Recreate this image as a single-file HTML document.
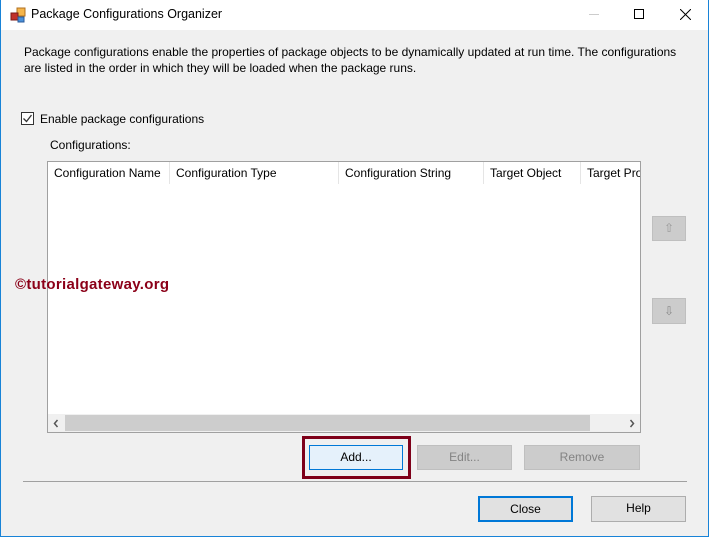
<!DOCTYPE html>
<html><head><style>
*{margin:0;padding:0;box-sizing:border-box}
body{width:709px;height:537px;background:#f0f0f0;font-family:"Liberation Sans",sans-serif;font-size:12px;color:#000;position:relative;overflow:hidden}
.a{position:absolute}
.btn{position:absolute;border:1px solid #adadad;background:#e1e1e1;text-align:center;line-height:23px;font-size:12px}
.dis{border-color:#bfbfbf;background:#cccccc;color:#838383}
.hd{position:absolute;top:0;height:22px;line-height:22px;padding-left:6px;border-right:1px solid #e5e5e5;white-space:nowrap;overflow:hidden}
</style></head><body>
<div class="a" style="left:0;top:0;width:709px;height:537px;border:1px solid #1883d7"></div>
<div class="a" style="left:1px;top:0;width:707px;height:30px;background:#fff"></div>
<svg class="a" style="left:10px;top:7px" width="16" height="16"><rect x="7" y="1" width="8" height="8" fill="#f5b54a" stroke="#b07020"/><rect x="1" y="6" width="7" height="7" fill="#c0302a" stroke="#7a1a18"/><rect x="8" y="10" width="6" height="5" fill="#4a90d9" stroke="#2a5a99"/></svg>
<div class="a" style="left:31px;top:7px;font-size:12.5px">Package Configurations Organizer</div>
<div class="a" style="left:589px;top:14px;width:10px;height:1px;background:#ccc"></div>
<div class="a" style="left:634px;top:9px;width:10px;height:10px;border:1px solid #000"></div>
<svg class="a" style="left:680px;top:9px" width="11" height="11"><path d="M0 0L11 11M11 0L0 11" stroke="#000" stroke-width="1"/></svg>
<div class="a" style="left:24px;top:44px;width:670px;line-height:16px">Package configurations enable the properties of package objects to be dynamically updated at run time. The configurations are listed in the order in which they will be loaded when the package runs.</div>
<div class="a" style="left:21px;top:112px;width:13px;height:13px;border:1px solid #333;background:#fff"></div>
<svg class="a" style="left:22px;top:113px" width="11" height="11"><path d="M1.5 5.5L4.5 8.5L9.5 2" stroke="#333" stroke-width="1.3" fill="none"/></svg>
<div class="a" style="left:40px;top:112px">Enable package configurations</div>
<div class="a" style="left:50px;top:138px">Configurations:</div>
<div class="a" style="left:47px;top:161px;width:594px;height:272px;border:1px solid #a0a0a0;background:#fff">
<div class="hd" style="left:0;width:122px">Configuration Name</div>
<div class="hd" style="left:122px;width:169px">Configuration Type</div>
<div class="hd" style="left:291px;width:145px">Configuration String</div>
<div class="hd" style="left:436px;width:97px">Target Object</div>
<div class="hd" style="left:533px;width:59px;border:none">Target Property</div>
<div class="a" style="left:0;top:252px;width:592px;height:18px;background:#f0f0f0"></div>
<div class="a" style="left:17px;top:253px;width:525px;height:16px;background:#cdcdcd"></div>
<svg class="a" style="left:5px;top:257px" width="6" height="9"><path d="M4.5 1L1.5 4.5L4.5 8" stroke="#555" stroke-width="1.5" fill="none"/></svg>
<svg class="a" style="left:581px;top:257px" width="6" height="9"><path d="M1.5 1L4.5 4.5L1.5 8" stroke="#555" stroke-width="1.5" fill="none"/></svg>
</div>
<div class="a" style="left:15px;top:276px;color:#8b0018;font-weight:bold;font-size:15px;letter-spacing:0.3px">©tutorialgateway.org</div>
<div class="btn dis" style="left:652px;top:216px;width:34px;height:25px;line-height:22px;color:#999">&#8679;</div>
<div class="btn dis" style="left:652px;top:298px;width:34px;height:26px;line-height:24px;color:#888">&#8681;</div>
<div class="a" style="left:302px;top:436px;width:109px;height:43px;border:3px solid #7e0019"></div>
<div class="btn" style="left:309px;top:445px;width:94px;height:25px;border-color:#0078d7;background:#e5f1fb">Add...</div>
<div class="btn dis" style="left:417px;top:445px;width:95px;height:25px">Edit...</div>
<div class="btn dis" style="left:524px;top:445px;width:116px;height:25px">Remove</div>
<div class="a" style="left:23px;top:481px;width:664px;height:1px;background:#a0a0a0"></div>
<div class="btn" style="left:478px;top:496px;width:95px;height:26px;border:2px solid #0078d7;line-height:22px">Close</div>
<div class="btn" style="left:591px;top:496px;width:95px;height:26px">Help</div>
</body></html>
